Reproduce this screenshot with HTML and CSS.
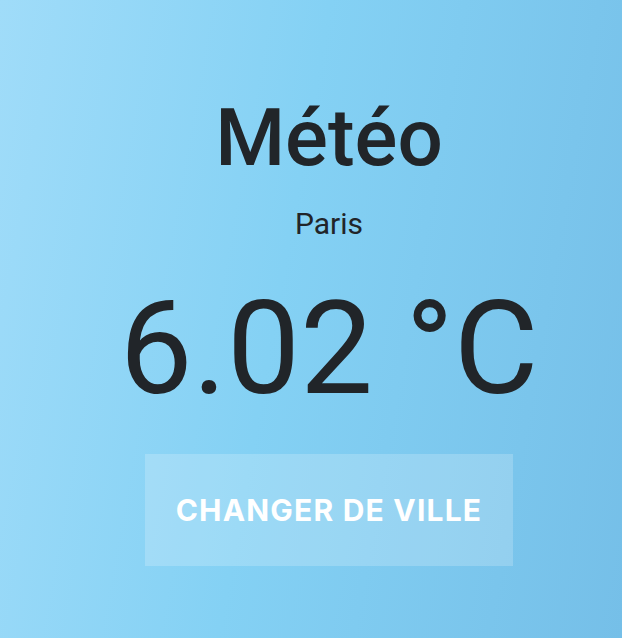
FILE: index.html
```html
<!DOCTYPE html>
<html lang="fr">
<head>
<meta charset="utf-8">
<title>Météo</title>
<link rel="stylesheet" href="styles.css">
</head>
<body>
<main class="app">
  <h1 class="title">Météo</h1>
  <p class="city">Paris</p>
  <p class="temp">6.02 °C</p>
  <button class="change">CHANGER DE VILLE</button>
</main>
</body>
</html>
```
FILE: styles.css
```css
html, body {
  margin: 0;
  height: 100%;
}
body {
  background: linear-gradient(100deg, #a0dcf9 0%, #84d1f4 45%, #75bfe8 100%);
  font-family: Roboto, "Noto Sans", sans-serif;
  color: #212529;
}
.app {
  display: flex;
  flex-direction: column;
  align-items: center;
  padding: 0 0 0 36px;
  box-sizing: border-box;
}
.title {
  margin: 90px 0 0;
  font-size: 80px;
  font-weight: 500;
  line-height: 96px;
}
.city {
  margin: 20px 0 0;
  font-size: 30px;
  line-height: 36px;
}
.temp {
  margin: 32px 0 0;
  font-size: 130px;
  font-weight: 400;
  line-height: 150px;
}
.change {
  margin-top: 30px;
  width: 368px;
  height: 112px;
  padding: 0;
  border: 0;
  background: rgba(255, 255, 255, 0.2);
  color: #fff;
  font-family: Inter, Roboto, sans-serif;
  font-weight: 700;
  font-size: 30px;
  letter-spacing: 1.2px;
  cursor: pointer;
}
```
